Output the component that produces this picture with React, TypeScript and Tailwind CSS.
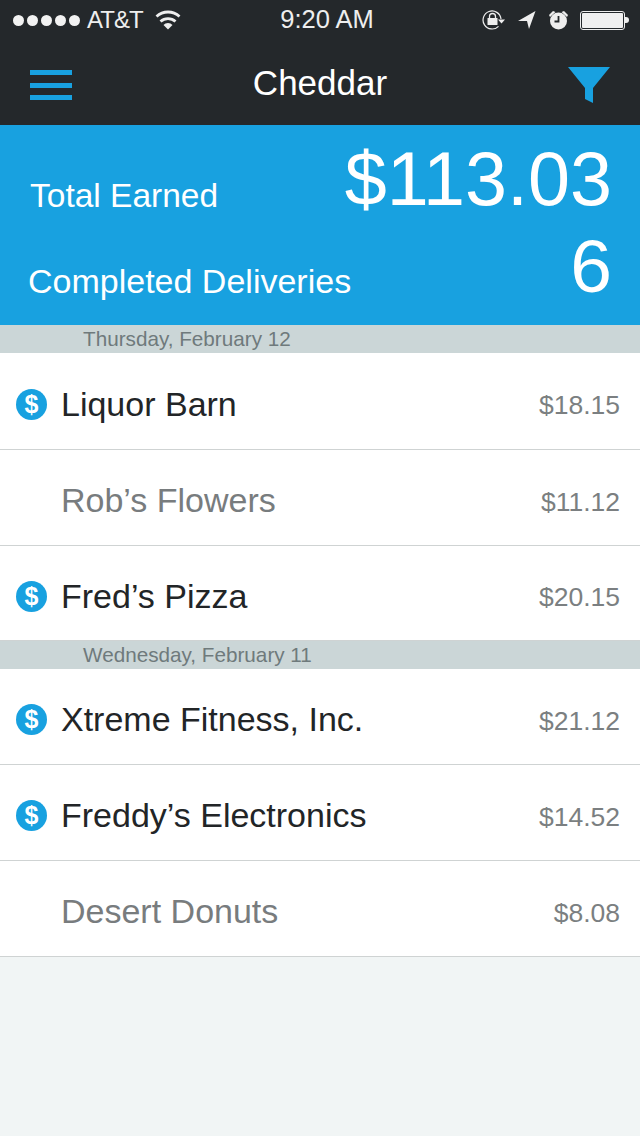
import { ReactNode } from 'react'

const font = { fontFamily: '"Liberation Sans", Arial, sans-serif' }

function DollarBadge() {
  return (
    <div className="flex h-[31px] w-[31px] shrink-0 items-center justify-center rounded-full bg-[#18a1e0] text-[25px] leading-none font-bold text-white">
      $
    </div>
  )
}

function StatusIcons() {
  return (
    <div className="flex items-center">
      <svg width="24" height="20" viewBox="0 0 24 20" className="mr-[12px]" fill="none">
        <path d="M19 9A9 9 0 1 0 16.500 16.300" stroke="#eee" strokeWidth="1.200" />
        <path d="M16 9.500h7l-3.500 4z" fill="#eee" />
        <rect x="5.500" y="8" width="10" height="7" rx="0.500" fill="#eee" />
        <path d="M7.500 8V6.500a3 3 0 0 1 6 0V8" stroke="#eee" strokeWidth="1.300" />
      </svg>
      <svg width="18" height="18" viewBox="0 0 18 18" className="mr-[12px]">
        <path d="M17.500 0L0 10L9 10L11 18z" fill="#eee" />
      </svg>
      <svg width="21" height="20" viewBox="0 0 21 20" className="mr-[11px]">
        <circle cx="10.500" cy="11" r="8.500" fill="#eee" />
        <path d="M10.500 6v5.500H6.500" stroke="#24282b" strokeWidth="1.800" fill="none" />
        <path d="M1 5l4-4 2.500 1-5.500 5zM20 5l-4-4-2.500 1 5.500 5z" fill="#eee" />
      </svg>
      <div className="flex items-center">
        <div className="h-[19px] w-[45px] rounded-[3px] border border-[#eee] p-[1px]">
          <div className="h-full w-full rounded-[1px] bg-[#f0f0f0]" />
        </div>
        <div className="h-[6px] w-[4px] rounded-r-sm bg-[#eee]" />
      </div>
    </div>
  )
}

function SectionHeader({ children }: { children: ReactNode }) {
  return (
    <div className="h-[28px] bg-[#cbd6d7] pl-[83px] text-[20.7px] leading-[28px] text-[#6f7a7c]">
      {children}
    </div>
  )
}

function DeliveryRow({
  name,
  amount,
  paid,
  height = 'h-[97px]',
}: {
  name: string
  amount: string
  paid?: boolean
  height?: string
}) {
  return (
    <div className={`flex items-center border-b border-[#cfd3d3] bg-white pt-[6px] pr-[20px] pl-[16px] ${height}`}>
      <div className="w-[45px] shrink-0">{paid && <DollarBadge />}</div>
      <div className={`flex-1 text-[34px] ${paid ? 'text-[#222527]' : 'text-[#787c7e]'}`}>{name}</div>
      <div className="pt-[4px] text-[26.5px] text-[#7b7f81]">{amount}</div>
    </div>
  )
}

export default function App() {
  return (
    <div className="flex h-[1136px] w-[640px] flex-col overflow-hidden bg-[#f1f5f5]" style={font}>
      <div className="h-[125px] bg-[#24282b] text-white">
        <div className="flex h-[40px] items-center justify-between pr-[11px] pl-[13px]">
          <div className="flex flex-1 items-center">
            <div className="flex gap-[3px]">
              {[0, 1, 2, 3, 4].map((i) => (
                <div key={i} className="h-[11px] w-[11px] rounded-full bg-[#f2f2f2]" />
              ))}
            </div>
            <span className="ml-[7px] text-[24px] leading-none tracking-[-1px] text-[#eee]">AT&amp;T</span>
            <svg width="26" height="20" viewBox="0 0 26 20" className="ml-[12px]" fill="none" stroke="#eee" strokeWidth="2.800">
              <path d="M1.500 6.500a17 17 0 0 1 23 0" />
              <path d="M5.500 11.500a11 11 0 0 1 15 0" />
              <path d="M13 19.500l-4.500-4.500a6 6 0 0 1 9 0z" fill="#eee" stroke="none" />
            </svg>
          </div>
          <span className="ml-[12px] text-[25.5px] leading-none text-[#eee]">9:20 AM</span>
          <div className="flex flex-1 justify-end">
            <StatusIcons />
          </div>
        </div>
        <div className="flex h-[85px] items-center justify-between px-[30px] pt-[5px]">
          <div className="flex w-[42px] flex-col gap-[7.5px]">
            <div className="h-[5px] bg-[#18a1e0]" />
            <div className="h-[5px] bg-[#18a1e0]" />
            <div className="h-[5px] bg-[#18a1e0]" />
          </div>
          <div className="pb-[3px] text-[35px] text-white">Cheddar</div>
          <svg width="42" height="36" viewBox="0 0 42 36">
            <path d="M0 0h42L25 21v15l-8-4V21z" fill="#18a1e0" />
          </svg>
        </div>
      </div>

      <div className="flex h-[200px] flex-col bg-[#18a1e0] pr-[28px] pl-[28px] text-white">
        <div className="flex h-[100px] items-end justify-between">
          <div className="pb-[9px] pl-[2px] text-[33.5px] leading-[40px]">Total Earned</div>
          <div className="text-[75.5px] leading-[92px]">$113.03</div>
        </div>
        <div className="flex h-[80px] items-start justify-between">
          <div className="pt-[36px] text-[34px] leading-[40px]">Completed Deliveries</div>
          <div className="pt-[1px] text-[75px] leading-[80px]">6</div>
        </div>
      </div>

      <SectionHeader>Thursday, February 12</SectionHeader>
      <DeliveryRow name="Liquor Barn" amount="$18.15" paid />
      <DeliveryRow name="Rob’s Flowers" amount="$11.12" height="h-[96px]" />
      <DeliveryRow name="Fred’s Pizza" amount="$20.15" paid height="h-[95px]" />
      <SectionHeader>Wednesday, February 11</SectionHeader>
      <DeliveryRow name="Xtreme Fitness, Inc." amount="$21.12" paid height="h-[96px]" />
      <DeliveryRow name="Freddy’s Electronics" amount="$14.52" paid height="h-[96px]" />
      <DeliveryRow name="Desert Donuts" amount="$8.08" paid={false} height="h-[96px]" />
    </div>
  )
}
